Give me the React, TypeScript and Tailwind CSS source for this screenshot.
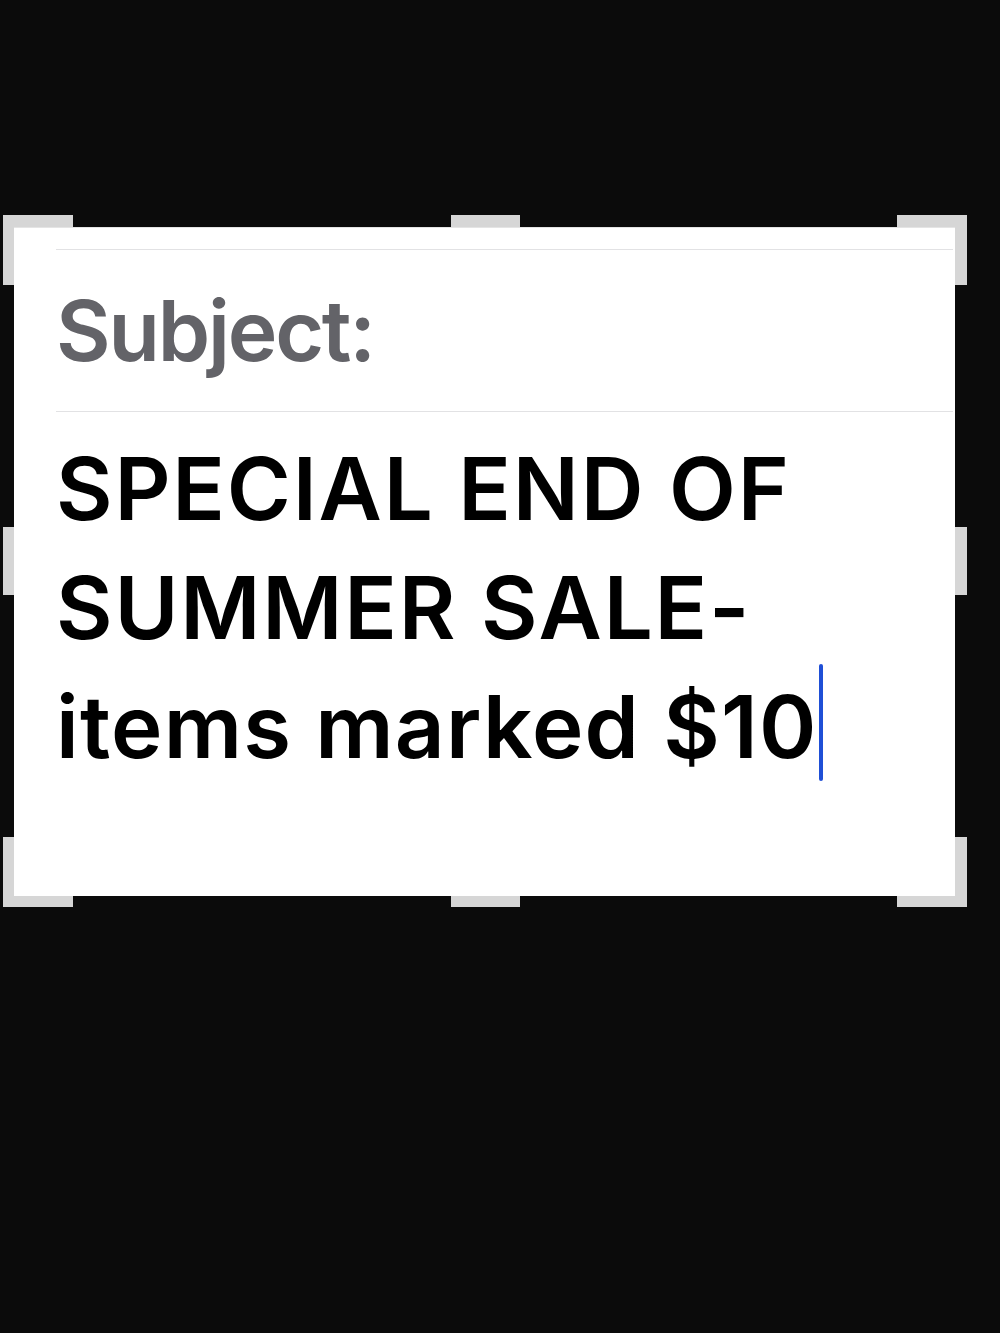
import React from "react";

function Handles() {
  const c = "absolute bg-[#d6d6d6]";
  return (
    <>
      <div className={`${c} left-0 top-0 w-[70px] h-[12px]`} />
      <div className={`${c} left-0 top-0 w-[11px] h-[70px]`} />
      <div className={`${c} right-0 top-0 w-[70px] h-[12px]`} />
      <div className={`${c} right-0 top-0 w-[12px] h-[70px]`} />
      <div className={`${c} left-0 bottom-0 w-[70px] h-[11px]`} />
      <div className={`${c} left-0 bottom-0 w-[11px] h-[70px]`} />
      <div className={`${c} right-0 bottom-0 w-[70px] h-[11px]`} />
      <div className={`${c} right-0 bottom-0 w-[12px] h-[70px]`} />
      <div className={`${c} left-[448px] top-0 w-[69px] h-[12px]`} />
      <div className={`${c} left-[448px] bottom-0 w-[69px] h-[11px]`} />
      <div className={`${c} left-0 top-[312px] w-[11px] h-[68px]`} />
      <div className={`${c} right-0 top-[312px] w-[12px] h-[68px]`} />
    </>
  );
}

export default function App() {
  return (
    <div
      className="w-[1000px] h-[1333px] bg-[#0b0b0b] overflow-hidden"
      style={{ fontFamily: "Inter, 'Noto Sans', sans-serif" }}
    >
      <div className="pt-[215px] pl-[3px]">
        <div className="relative w-[964px] h-[692px] pl-[11px] pt-[12px] pr-[12px] pb-[11px]">
          <Handles />
          <div className="w-full h-full bg-white border-t border-[#e4e4e4] pt-[21px] pl-[42px] pr-[2px]">
            <div className="h-[1px] bg-[#e2e2e4]" />
            <div className="pt-[39px] pb-[38px]">
              <div className="text-[84px] leading-[84px] font-semibold text-[#636368] tracking-[-2.2px]">
                Subject:
              </div>
            </div>
            <div className="h-[1px] bg-[#e2e2e4]" />
            <div className="pt-[17px] text-[87px] leading-[119px] font-semibold text-black tracking-[1.8px]">
              <div>SPECIAL END OF</div>
              <div>SUMMER SALE-</div>
              <div className="flex items-center">
                <span className="tracking-[1.2px]">items marked $10</span>
                <span className="inline-block w-[4px] h-[117px] bg-[#1f4fd6] rounded-full ml-[1px] mt-[-8px]" />
              </div>
            </div>
          </div>
        </div>
      </div>
    </div>
  );
}
